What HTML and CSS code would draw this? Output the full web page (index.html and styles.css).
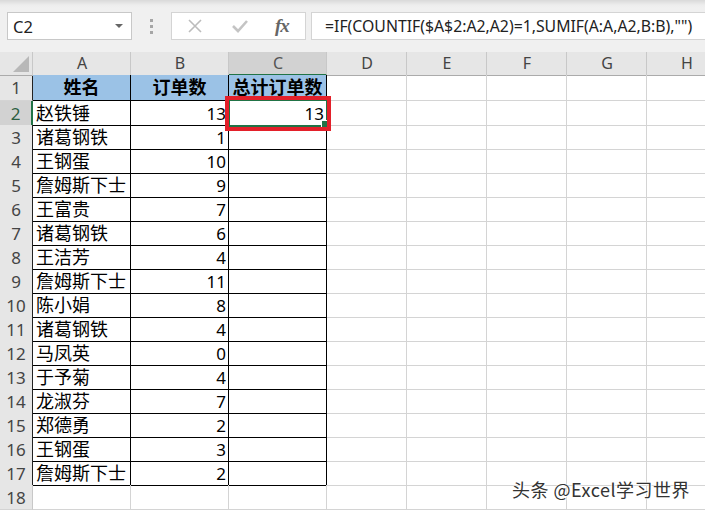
FILE: index.html
```html
<!DOCTYPE html>
<html>
<head>
<meta charset="utf-8">
<meta name="viewport" content="width=device-width, initial-scale=1">
<title>Sheet</title>
<link rel="stylesheet" href="styles.css">
</head>
<body>

<div class="toolbar">
  <div class="namebox"><span>C2</span><i class="caret"></i></div>
  <div class="grip"><i></i><i></i><i></i></div>
  <div class="fxbox">
    <svg class="ico" width="16" height="16" viewBox="0 0 16 16"><path d="M2 2L14 14M14 2L2 14" stroke="#bcbcbc" stroke-width="1.6" fill="none"/></svg>
    <svg class="ico" width="18" height="16" viewBox="0 0 18 16"><path d="M2 8L7 13L16 3" stroke="#c4c4c4" stroke-width="2.6" fill="none"/></svg>
    <span class="fx">fx</span>
  </div>
  <div class="formula">=IF(COUNTIF($A$2:A2,A2)=1,SUMIF(A:A,A2,B:B),"")</div>
</div>

<div class="sheet" id="sheet">
  <div class="row head">
    <div class="corner"><i></i></div>
    <div>A</div>
    <div>B</div>
    <div class="sel-col">C</div>
    <div>D</div>
    <div>E</div>
    <div>F</div>
    <div>G</div>
    <div>H</div>
  </div>
</div>

<div class="watermark">头条 @Excel学习世界</div>

<script>
var data = [
  ["赵铁锤", 13, 13],
  ["诸葛钢铁", 1],
  ["王钢蛋", 10],
  ["詹姆斯下士", 9],
  ["王富贵", 7],
  ["诸葛钢铁", 6],
  ["王洁芳", 4],
  ["詹姆斯下士", 11],
  ["陈小娟", 8],
  ["诸葛钢铁", 4],
  ["马凤英", 0],
  ["于予菊", 4],
  ["龙淑芬", 7],
  ["郑德勇", 2],
  ["王钢蛋", 3],
  ["詹姆斯下士", 2]
];

var sheet = document.getElementById("sheet");

function cell(row, cls, text) {
  var d = document.createElement("div");
  if (cls) d.className = cls;
  if (text !== undefined) d.appendChild(document.createTextNode(text));
  row.appendChild(d);
  return d;
}

function addRow(num, cls) {
  var r = document.createElement("div");
  r.className = "row" + (cls ? " " + cls : "");
  cell(r, "num", num);
  sheet.appendChild(r);
  return r;
}

// title row
var r1 = addRow(1, "first in");
cell(r1, "t title", "姓名");
cell(r1, "t title", "订单数");
cell(r1, "t title", "总计订单数");
for (var k = 0; k < 5; k++) cell(r1);

for (var i = 0; i < data.length; i++) {
  var r = addRow(i + 2, i == 0 ? "in sel-row" : "in");
  cell(r, "t", data[i][0]);
  cell(r, "t n", data[i][1]);
  var c = cell(r, "t n", data[i][2]);
  if (i == 0) {
    c.className = "t n active";
    var red = document.createElement("span");
    red.className = "mark";
    c.appendChild(red);
  }
  for (var k = 0; k < 5; k++) cell(r);
}

var last = addRow(18);
for (var k = 0; k < 8; k++) cell(last);
</script>

</body>
</html>
```

FILE: styles.css
```css
* {box-sizing: border-box;}

body {
  margin: 0;
  width: 705px;
  height: 510px;
  overflow: hidden;
  position: relative;
  background: #f0f0f0;
  font-family: "Noto Sans", "Noto Sans CJK SC", sans-serif;
}

/* formula bar */
.toolbar {
  height: 52px;
  display: flex;
  align-items: flex-start;
  padding-top: 12px;
  background: linear-gradient(#d9d9d9 0, #ededed 5px, #f0f0f0 8px);
}

.namebox {
  margin-left: 7px;
  width: 125px;
  height: 28px;
  background: #fff;
  border: 1px solid #c8c8c8;
  display: flex;
  align-items: center;
  justify-content: space-between;
  padding: 0 8px 0 5px;
  font-size: 16.5px;
  color: #222;
}

.caret {
  width: 0;
  height: 0;
  border-left: 4px solid transparent;
  border-right: 4px solid transparent;
  border-top: 4px solid #666;
}

.grip {
  width: 39px;
  height: 28px;
  display: flex;
  flex-direction: column;
  align-items: center;
  justify-content: center;
  gap: 3px;
}

.grip i {
  width: 3px;
  height: 3px;
  background: #a6a6a6;
}

.fxbox {
  width: 135px;
  height: 28px;
  background: #fff;
  border: 1px solid #d4d4d4;
  display: flex;
  align-items: center;
  padding-left: 15px;
  gap: 28px;
}

.fx {
  font-family: "Liberation Serif", serif;
  font-style: italic;
  font-weight: bold;
  font-size: 19px;
  color: #666;
  margin-left: -2px;
  letter-spacing: -1px;
}

.formula {
  margin-left: 5px;
  flex: 1;
  height: 28px;
  background: #fff;
  border: 1px solid #d4d4d4;
  border-right: none;
  padding-left: 13px;
  font-size: 15.8px;
  line-height: 26px;
  color: #222;
  white-space: nowrap;
  overflow: hidden;
}

/* grid */
.row {
  display: grid;
  grid-template-columns: 33px 98px 98px 98px 80px 80px 80px 80px 80px;
  height: 24px;
  background: #fff;
}

.row > div {
  border-right: 1px solid #d4d4d4;
  border-bottom: 1px solid #d4d4d4;
  font-size: 18px;
  line-height: 23px;
  padding: 1px 2px 0 3px;
  white-space: nowrap;
  color: #000;
}

.row.first {
  height: 26px;
}

.row.first > div {
  line-height: 25px;
  padding-top: 0;
}

.head {
  height: 23px;
  background: #e6e6e6;
}

.head > div {
  text-align: center;
  font-size: 16px;
  line-height: 22px;
  padding-top: 0;
  color: #444;
  border-right-color: #c8c8c8;
  border-bottom-color: #ababab;
}

.head > div:nth-child(2),
.head > div:nth-child(3) {
  border-bottom-color: #555;
}

.head .sel-col {
  background: #d2d2d2;
  color: #555;
  border-bottom: 2px solid #217346;
}

.corner {
  position: relative;
}

.corner i {
  position: absolute;
  right: 3px;
  bottom: 3px;
  width: 0;
  height: 0;
  border-left: 16px solid transparent;
  border-bottom: 16px solid #b8b8b8;
}

.row .num {
  background: #e6e6e6;
  text-align: center;
  font-size: 17px;
  color: #444;
  border-right-color: #c8c8c8;
  padding-left: 0;
  padding-right: 0;
}

.row.in .num {
  border-right-color: #222;
}

.row.sel-row .num {
  background: #d2d2d2;
  color: #2d5f43;
  border-right: 2px solid #217346;
}

.row > .t {
  border-right-color: #000;
  border-bottom-color: #000;
}

.row > .title {
  background: #9bc2e6;
  font-weight: bold;
  text-align: center;
  padding: 0;
}

.row > .n {
  text-align: right;
  font-size: 17px;
}

/* active cell C2 */
.row > .active {
  position: relative;
}

.active::after {
  content: "";
  position: absolute;
  left: -1px;
  top: -2px;
  right: -2px;
  bottom: -2px;
  border: 2px solid #217346;
}

.active::before {
  content: "";
  position: absolute;
  right: -4px;
  bottom: -4px;
  width: 7px;
  height: 7px;
  background: #217346;
  border: 1px solid #fff;
  z-index: 2;
}

.mark {
  position: absolute;
  left: -4px;
  top: -5px;
  right: -5px;
  bottom: -6px;
  border: 4px solid #e3202a;
  z-index: 3;
}

.watermark {
  position: absolute;
  left: 512px;
  top: 476px;
  font-family: "Noto Sans CJK SC", sans-serif;
  font-size: 18px;
  color: #333;
  text-shadow: 0 0 2px #fff, 0 0 2px #fff, 1px 1px 1px #fff;
  letter-spacing: 0.5px;
}
```
